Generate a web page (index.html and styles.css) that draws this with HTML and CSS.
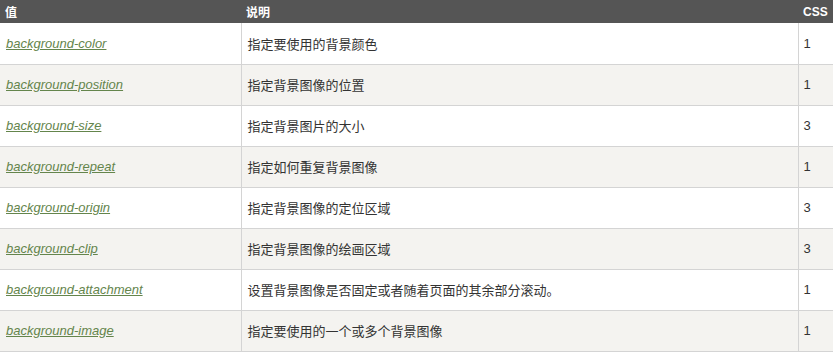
FILE: index.html
```html
<!DOCTYPE html>
<html>
<head>
<meta charset="utf-8">
<link rel="stylesheet" href="styles.css">
</head>
<body>
<table class="ref">
  <thead>
    <tr><th class="c1">值</th><th class="c2">说明</th><th class="c3">CSS</th></tr>
  </thead>
  <tbody>
    <tr><td><a href="#">background-color</a></td><td>指定要使用的背景颜色</td><td>1</td></tr>
    <tr><td><a href="#">background-position</a></td><td>指定背景图像的位置</td><td>1</td></tr>
    <tr><td><a href="#">background-size</a></td><td>指定背景图片的大小</td><td>3</td></tr>
    <tr><td><a href="#">background-repeat</a></td><td>指定如何重复背景图像</td><td>1</td></tr>
    <tr><td><a href="#">background-origin</a></td><td>指定背景图像的定位区域</td><td>3</td></tr>
    <tr><td><a href="#">background-clip</a></td><td>指定背景图像的绘画区域</td><td>3</td></tr>
    <tr><td><a href="#">background-attachment</a></td><td>设置背景图像是否固定或者随着页面的其余部分滚动。</td><td>1</td></tr>
    <tr><td><a href="#">background-image</a></td><td>指定要使用的一个或多个背景图像</td><td>1</td></tr>
  </tbody>
</table>
</body>
</html>
```
FILE: styles.css
```css
html, body {
  margin: 0;
  padding: 0;
  background: #fff;
}
body {
  font-family: "Liberation Sans", Arial, "Noto Sans CJK SC", sans-serif;
  font-size: 13px;
  color: #333;
}
.ref {
  border-collapse: collapse;
  width: 833px;
  table-layout: fixed;
}
.ref th {
  background: #555;
  color: #fff;
  font-weight: bold;
  font-size: 12px;
  text-align: left;
  height: 23px;
  padding: 0 5px;
  vertical-align: middle;
  font-family: "Noto Sans CJK SC", "Liberation Sans", sans-serif;
}
.ref th.c1 { width: 241px; box-sizing: border-box; }
.ref th.c2 { width: 557px; box-sizing: border-box; }
.ref th.c3 { width: 35px; box-sizing: border-box; font-family: "Liberation Sans", Arial, sans-serif; }
.ref td {
  height: 40px;
  box-sizing: border-box;
  padding: 0 6px;
  border: 1px solid #d4d4d4;
  border-top: none;
  vertical-align: middle;
  font-family: "Liberation Sans", Arial, "Noto Sans CJK SC", sans-serif;
}
.ref td:first-child { border-left: none; }
.ref td:last-child { border-right: none; padding-left: 5px; }
.ref tbody tr:nth-child(even) td { background: #f4f3f0; }
.ref tbody tr { height: 41px; }
.ref a {
  color: #64854c;
  font-style: italic;
  text-decoration: underline;
}
```
